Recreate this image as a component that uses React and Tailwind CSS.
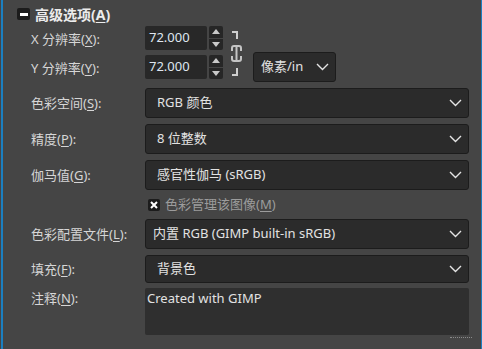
import React from 'react';

const FONT = { fontFamily: '"Noto Sans", "Noto Sans CJK SC", sans-serif' };

function Chevron() {
  return (
    <svg width="13" height="8" viewBox="0 0 13 8" className="shrink-0">
      <polyline points="1,1 6.5,6.5 12,1" fill="none" stroke="#e4e4e4" strokeWidth="1.4" />
    </svg>
  );
}

function Label({ text, k, className = '' }) {
  return (
    <div className={`w-[114px] shrink-0 text-[13px] text-[#d6d6d6] leading-[20px] whitespace-nowrap ${className}`}>
      {text}(<span className="underline underline-offset-2">{k}</span>):
    </div>
  );
}

function Combo({ children, className = '', pl = 'pl-[11px]' }) {
  return (
    <div
      className={`flex items-center justify-between rounded-[3px] border border-[#1c1c1c] bg-[#2b2b2b] ${pl} pr-[6px] text-[13px] text-[#e2e2e2] ${className}`}
    >
      <span className="whitespace-nowrap">{children}</span>
      <Chevron />
    </div>
  );
}

function Spin({ value }) {
  return (
    <div className="flex h-[24px] items-stretch gap-[2px]">
      <div className="flex w-[62px] items-center rounded-[2px] bg-[#282828] pl-[4px] text-[13px] text-[#dfe6ef]">
        {value}
      </div>
      <div className="flex w-[14px] flex-col gap-[1px]">
        <div className="flex flex-1 items-center justify-center rounded-t-[2px] bg-[#262626]">
          <svg width="8" height="5" viewBox="0 0 8 5">
            <polygon points="0,5 4,0 8,5" fill="#c9c9c9" />
          </svg>
        </div>
        <div className="flex flex-1 items-center justify-center rounded-b-[2px] bg-[#262626]">
          <svg width="8" height="5" viewBox="0 0 8 5">
            <polygon points="0,0 8,0 4,5" fill="#c9c9c9" />
          </svg>
        </div>
      </div>
    </div>
  );
}

function ChainIcon() {
  return (
    <svg width="15" height="45" viewBox="0 0 15 45" className="shrink-0">
      <path d="M2 1 H7 V8" fill="none" stroke="#cfcfcf" strokeWidth="2" />
      <path d="M2 44 H7 V37" fill="none" stroke="#cfcfcf" strokeWidth="2" />
      <path d="M2 20 V17 Q2 15 4 15 H9 Q11 15 11 17 V20" fill="none" stroke="#c4c4c4" strokeWidth="2" />
      <path d="M2 25 V28 Q2 30 4 30 H9 Q11 30 11 28 V25" fill="none" stroke="#c4c4c4" strokeWidth="2" />
      <path d="M6.5 16 V29" fill="none" stroke="#c4c4c4" strokeWidth="2" />
    </svg>
  );
}

export default function App() {
  return (
    <div className="flex h-[349px] w-[482px] overflow-hidden bg-[#454545]" style={FONT}>
      <div className="w-[1px] shrink-0" />
      <div className="w-[2px] shrink-0 bg-[#1b7fc0]" />
      <div className="flex flex-1 flex-col pt-[2px]">
        {/* header */}
        <div className="flex h-[24px] items-center pl-[14px]">
          <div className="flex h-[12px] w-[13px] items-center justify-center rounded-[2px] bg-[#1c1c1c]">
            <div className="h-[3px] w-[8px] bg-white" />
          </div>
          <div className="ml-[5px] text-[14px] font-bold text-[#ececec]">
            高级选项(<span className="underline underline-offset-2">A</span>)
          </div>
        </div>

        <div className="pl-[28px] pr-[12px]">
          {/* resolution */}
          <div className="flex items-start">
            <div className="flex w-[114px] flex-col">
              <Label text="X 分辨率" k="X" className="mt-[3px]" />
              <Label text="Y 分辨率" k="Y" className="mt-[9px]" />
            </div>
            <div className="flex flex-col gap-[5px]">
              <Spin value="72.000" />
              <Spin value="72.000" />
            </div>
            <div className="ml-[7px] mt-[5px]">
              <ChainIcon />
            </div>
            <Combo className="ml-[8px] mt-[26px] h-[30px] w-[83px]" pl="pl-[7px]">
              像素/in
            </Combo>
          </div>

          <div className="mt-[6px] flex items-center">
            <Label text="色彩空间" k="S" />
            <Combo className="h-[30px] w-[324px]">RGB 颜色</Combo>
          </div>
          <div className="mt-[6px] flex items-center">
            <Label text="精度" k="P" />
            <Combo className="h-[30px] w-[324px]">8 位整数</Combo>
          </div>
          <div className="mt-[6px] flex items-center">
            <Label text="伽马值" k="G" />
            <Combo className="h-[30px] w-[324px]">感官性伽马 (sRGB)</Combo>
          </div>

          {/* checkbox */}
          <div className="flex h-[29px] items-center pl-[117px]">
            <div className="flex h-[12px] w-[12px] items-center justify-center rounded-[2px] bg-[#1c1c1c]">
              <svg width="8" height="8" viewBox="0 0 8 8">
                <path d="M1 1 L7 7 M7 1 L1 7" stroke="#ffffff" strokeWidth="2" />
              </svg>
            </div>
            <div className="ml-[5px] text-[13px] text-[#9c9c9c]">
              色彩管理该图像(<span className="underline underline-offset-2">M</span>)
            </div>
          </div>

          <div className="flex items-center">
            <Label text="色彩配置文件" k="L" />
            <Combo className="h-[30px] w-[324px]" pl="pl-[7px]">
              内置 RGB (GIMP built-in sRGB)
            </Combo>
          </div>
          <div className="mt-[6px] flex items-center">
            <Label text="填充" k="F" />
            <Combo className="h-[28px] w-[324px]">背景色</Combo>
          </div>
          <div className="mt-[5px] flex items-start">
            <Label text="注释" k="N" />
            <div className="h-[47px] w-[324px] rounded-[2px] bg-[#2f2f2f] pl-[2px] pt-[2px] text-[13px] leading-[16px] text-[#e2e2e2]">
              Created with GIMP
            </div>
          </div>
          <div className="mt-[2px] flex justify-end">
            <div className="mr-[-3px] w-[22px] border-t border-dotted border-[#8a8a8a]" />
          </div>
        </div>
      </div>
      <div className="w-[1px] shrink-0 bg-[#1b7fc0]" />
    </div>
  );
}
